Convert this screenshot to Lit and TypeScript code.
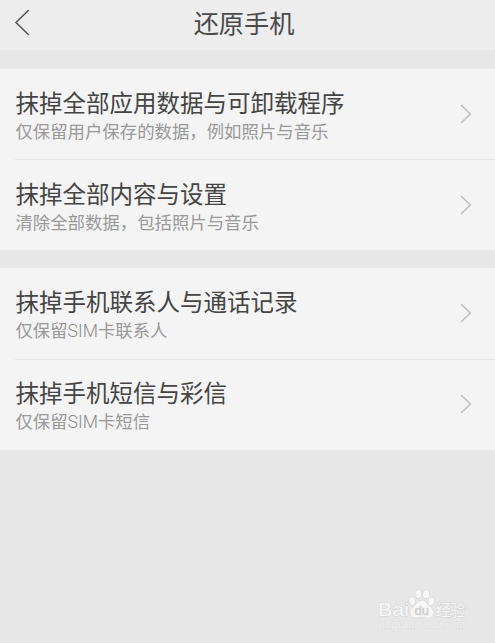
import { LitElement, html, css, svg } from "lit";
import { customElement, property } from "lit/decorators.js";

@customElement("setting-row")
class SettingRow extends LitElement {
  @property() heading = "";
  @property() note = "";

  static styles = css`
    :host {
      display: flex;
      align-items: center;
      box-sizing: border-box;
      height: 91px;
      margin-left: 15.4px;
      padding-right: 23px;
    }
    .text {
      flex: 1;
      white-space: nowrap;
    }
    .heading {
      font-size: 23.5px;
      line-height: 32px;
      margin-top: -1px;
      color: #444;
    }
    .note {
      font-size: 17.4px;
      line-height: 25px;
      color: #999;
    }
    .latin {
      font-family: Roboto, sans-serif;
      font-weight: 300;
      font-size: 17.6px;
      line-height: 1;
      color: #8a8a8a;
    }
    .chevron {
      width: 12px;
      height: 20px;
      margin-top: -1px;
      fill: none;
      stroke: #c0c0c0;
      stroke-width: 1.6;
    }
  `;

  render() {
    return html`
      <div class="text">
        <div class="heading">${this.heading}</div>
        <div class="note">
          ${this.note.split(/([A-Z]+)/).map((part) =>
            /^[A-Z]+$/.test(part) ? html`<span class="latin">${part}</span>` : part
          )}
        </div>
      </div>
      <svg class="chevron" viewBox="0 0 12 20"><path d="M1 1 L10.3 10 L1 19" /></svg>
    `;
  }
}

@customElement("baidu-mark")
class BaiduMark extends LitElement {
  static styles = css`
    :host {
      display: block;
      width: 94px;
      height: 46px;
    }
    svg {
      display: block;
    }
    .ink {
      fill: #f7f7f7;
      stroke: #d6d6d6;
      stroke-width: 1.2;
      paint-order: stroke;
    }
    .word {
      font: 400 18.5px "Liberation Sans", sans-serif;
    }
    .fill {
      fill: none;
      stroke: #f7f7f7;
      stroke-width: 0.7;
    }
    .du {
      font: 400 13px "Liberation Sans", sans-serif;
      fill: #cfcfcf;
      stroke: #cfcfcf;
      stroke-width: 0.5;
    }
    .cjk {
      font: 400 15.5px "Noto Sans CJK SC", sans-serif;
    }
    .url {
      font: 11.5px "Liberation Serif", serif;
      fill: #f1f1f1;
      stroke: #dddddd;
      stroke-width: 0.8;
      paint-order: stroke;
    }
  `;

  render() {
    return html`
      <svg width="94" height="46" viewBox="0 0 94 46">
        ${svg`
          <text class="ink word" x="0" y="27" textLength="31" lengthAdjust="spacingAndGlyphs">Bai</text>
          <g class="ink">
            <ellipse cx="34.2" cy="12" rx="2.9" ry="4" transform="rotate(-15 34.2 12)" />
            <ellipse cx="40.4" cy="5" rx="3" ry="4.3" />
            <ellipse cx="48" cy="5" rx="3" ry="4.3" transform="rotate(8 48 5)" />
            <ellipse cx="53.3" cy="12.3" rx="2.9" ry="4" transform="rotate(15 53.3 12.3)" />
            <path d="M44 11.3 C40 11.3 38.5 15.4 35.8 17.6 C32.9 20 31.4 22.8 32.9 26 C35 29.6 40 28.3 44 28.3 C48.5 28.3 53 29.5 55.1 26 C56.8 22.6 54.3 19.9 51.5 17.6 C48.9 15.4 47.8 11.3 44 11.3 Z" />
          </g>
          <text class="du" x="36.5" y="26.3" textLength="14.5" lengthAdjust="spacingAndGlyphs">du</text>
          <text class="ink cjk" x="57.5" y="27" textLength="30">经验</text>
          <text class="url" x="1" y="39" textLength="86" lengthAdjust="spacingAndGlyphs">jingyan.baidu.com</text>
        `}
      </svg>
    `;
  }
}

@customElement("app-root")
class AppRoot extends LitElement {
  static styles = css`
    :host {
      display: flex;
      flex-direction: column;
      position: relative;
      box-sizing: border-box;
      height: 643px;
      overflow: hidden;
      background: #e7e7e7;
      font-family: "Noto Sans CJK SC", sans-serif;
      font-weight: 400;
    }
    .bar {
      display: grid;
      grid-template-columns: 44px 1fr 51px;
      align-items: center;
      height: 50px;
      margin-bottom: 19px;
      background: #ededed;
      flex: none;
    }
    .back {
      width: 17px;
      height: 28px;
      margin: -6px 0 0 14px;
      fill: none;
      stroke: #555;
      stroke-width: 1.5;
    }
    .title {
      margin-top: -6px;
      font-size: 25.2px;
      line-height: 36px;
      text-align: center;
      color: #4a4a4a;
      white-space: nowrap;
    }
    .group {
      flex: none;
      background: #f4f4f4;
      height: 181px;
      margin-bottom: 18px;
    }
    .group:last-of-type {
      height: 182px;
    }
    .rule {
      height: 1px;
      margin: -1px 0 0 15px;
      background: #e6e6e6;
    }
    .group:last-of-type .rule {
      margin-top: 0;
    }
    .group:last-of-type .rule + setting-row {
      margin-top: -1px;
    }
    .mark {
      position: absolute;
      left: 378px;
      top: 589px;
    }
  `;

  render() {
    return html`
      <header class="bar">
        <svg class="back" viewBox="0 0 17 28"><path d="M14.8 2 L2 14.5 L14.8 27" /></svg>
        <div class="title">还原手机</div>
      </header>
      <section class="group">
        <setting-row heading="抹掉全部应用数据与可卸载程序" note="仅保留用户保存的数据，例如照片与音乐"></setting-row>
        <div class="rule"></div>
        <setting-row heading="抹掉全部内容与设置" note="清除全部数据，包括照片与音乐"></setting-row>
      </section>
      <section class="group">
        <setting-row heading="抹掉手机联系人与通话记录" note="仅保留SIM卡联系人"></setting-row>
        <div class="rule"></div>
        <setting-row heading="抹掉手机短信与彩信" note="仅保留SIM卡短信"></setting-row>
      </section>
      <baidu-mark class="mark"></baidu-mark>
    `;
  }
}
